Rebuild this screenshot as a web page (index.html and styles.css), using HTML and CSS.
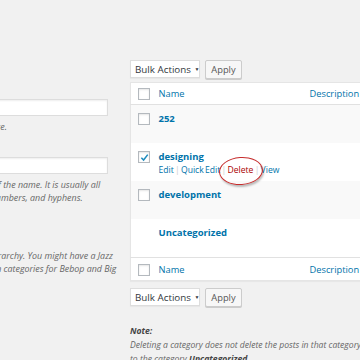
FILE: index.html
```html
<!DOCTYPE html>
<html lang="en">
<head>
    <meta charset="UTF-8">
    <meta name="viewport" content="width=device-width, initial-scale=1.0">
    <title>Categories</title>
    <link rel="stylesheet" href="styles.css">
</head>
<body>
    <div class="wrap">
        <div class="col-left">
            <div class="form-field">
                <label>Name</label>
                <div class="text-input"></div>
                <p class="desc">The name is how it appears on your site.</p>
            </div>
            <div class="form-field">
                <label>Slug</label>
                <div class="text-input"></div>
                <p class="desc">The &ldquo;slug&rdquo; is the URL-friendly version of the name. It is usually all<br>lowercase and contains only letters, numbers, and hyphens.</p>
            </div>
            <div class="form-field">
                <label>Parent</label>
                <div class="parent-select">None</div>
                <p class="desc">Categories, unlike tags, can have a hierarchy. You might have a Jazz<br>category, and under that have children categories for Bebop and Big</p>
            </div>
        </div>

        <div class="col-right">
            <div class="tablenav top">
                <div class="bulk-select">Bulk Actions <span class="arrow">&#9660;</span></div>
                <div class="btn">Apply</div>
            </div>

            <table class="list">
                <colgroup>
                    <col class="c-cb">
                    <col class="c-name">
                    <col class="c-desc">
                </colgroup>
                <thead>
                    <tr>
                        <th class="check"><span class="cb"></span></th>
                        <th><a href="#">Name</a></th>
                        <th><a href="#">Description</a></th>
                    </tr>
                </thead>
                <tbody>
                    <tr class="alt">
                        <td class="check"><span class="cb"></span></td>
                        <td><a class="row-title" href="#">252</a><div class="row-actions"></div></td>
                        <td></td>
                    </tr>
                    <tr>
                        <td class="check"><span class="cb checked">
                            <svg width="9" height="9" viewBox="0 0 10 10"><path d="M1.5 5.2 L4 7.8 L8.6 1.8" fill="none" stroke="#1e8cbe" stroke-width="1.7"/></svg>
                        </span></td>
                        <td>
                            <a class="row-title" href="#">designing</a>
                            <div class="row-actions shown">
                                <a href="#">Edit</a> <span class="sep">|</span>
                                <a href="#">Quick Edit</a> <span class="sep">|</span>
                                <span class="del-wrap"><a class="delete" href="#">Delete</a><span class="circle"></span></span> <span class="sep">|</span>
                                <a href="#">View</a>
                            </div>
                        </td>
                        <td></td>
                    </tr>
                    <tr class="alt">
                        <td class="check"><span class="cb"></span></td>
                        <td><a class="row-title" href="#">development</a><div class="row-actions"></div></td>
                        <td></td>
                    </tr>
                    <tr>
                        <td class="check"></td>
                        <td><a class="row-title" href="#">Uncategorized</a><div class="row-actions"></div></td>
                        <td></td>
                    </tr>
                </tbody>
                <tfoot>
                    <tr>
                        <th class="check"><span class="cb"></span></th>
                        <th><a href="#">Name</a></th>
                        <th><a href="#">Description</a></th>
                    </tr>
                </tfoot>
            </table>

            <div class="tablenav bottom">
                <div class="bulk-select">Bulk Actions <span class="arrow">&#9660;</span></div>
                <div class="btn">Apply</div>
            </div>

            <div class="note">
                <p><strong>Note:</strong><br>
                Deleting a category does not delete the posts in that category. Instead, posts that were only assigned<br>
                to the category <strong>Uncategorized</strong>.</p>
            </div>
        </div>
    </div>
</body>
</html>
```

FILE: styles.css
```css
html, body {
    margin: 0;
    padding: 0;
    overflow: hidden;
}
body {
    width: 360px;
    height: 360px;
    background-color: #f1f1f1;
    color: #444;
    font-family: "Open Sans", "Liberation Sans", sans-serif;
    font-size: 9.3px;
}
a {
    color: #0073aa;
    text-decoration: none;
}
.wrap {
    display: flex;
    gap: 22px;
}

/* left column: add new category form (cut off on the left) */
.col-left {
    flex: none;
    width: 259px;
    margin-left: -151px;
    padding-top: 84px;
}
.form-field {
    margin-bottom: 9px;
}
.form-field label {
    display: block;
    line-height: 15px;
}
.text-input {
    height: 15px;
    background-color: #fff;
    border: 1px solid #ddd;
    box-shadow: inset 0 1px 2px rgba(0, 0, 0, 0.07);
}
.parent-select {
    width: 60px;
    height: 15px;
    line-height: 15px;
    padding-left: 4px;
    background-color: #fff;
    border: 1px solid #ddd;
}
.desc {
    margin: 4px 0 0;
    font-style: italic;
    font-size: 8.9px;
    line-height: 13px;
    color: #666;
    white-space: nowrap;
}

/* right column: categories list */
.col-right {
    flex: none;
    width: 300px;
}
.tablenav {
    display: flex;
    gap: 5px;
    height: 18px;
}
.tablenav.top {
    margin-top: 60px;
    margin-bottom: 4px;
}
.tablenav.bottom {
    margin-top: 7px;
}
.bulk-select {
    width: 64px;
    height: 16px;
    padding-left: 4px;
    line-height: 16px;
    background-color: #fff;
    border: 1px solid #ddd;
    box-shadow: 0 1px 1px rgba(0, 0, 0, 0.04);
    color: #32373c;
    font-size: 9.8px;
    white-space: nowrap;
}
.bulk-select .arrow {
    font-size: 5px;
    vertical-align: 2px;
    margin-left: 1px;
}
.btn {
    width: 35px;
    height: 17px;
    line-height: 17px;
    text-align: center;
    background-color: #f7f7f7;
    border: 1px solid #ccc;
    border-radius: 2px;
    box-shadow: 0 1px 0 #ccc;
    color: #555;
    font-size: 9.3px;
}

.list {
    width: 280px;
    table-layout: fixed;
    border-collapse: collapse;
    background-color: #fff;
    border: 1px solid #e5e5e5;
    box-shadow: 0 1px 1px rgba(0, 0, 0, 0.04);
}
.c-cb { width: 22px; }
.c-name { width: 151px; }
.c-desc { width: 107px; }

.list th {
    height: 13px;
    padding: 4px 6px;
    line-height: 13px;
    text-align: left;
    font-weight: normal;
}
.list thead th {
    border-bottom: 1px solid #e1e1e1;
}
.list tfoot th {
    border-top: 1px solid #e1e1e1;
    padding-top: 5px;
}
.list td {
    padding: 7px 6px 4px;
    vertical-align: top;
}
.list tr.alt td {
    background-color: #f9f9f9;
}
.list .check {
    padding-left: 7px;
    padding-right: 0;
}
.list td.check {
    padding-top: 8px;
}
.cb {
    display: block;
    width: 10px;
    height: 10px;
    background-color: #fff;
    border: 1px solid #b4b9be;
    box-shadow: inset 0 1px 2px rgba(0, 0, 0, 0.1);
}
.cb svg {
    display: block;
    margin: 0.5px 0 0 0.5px;
}
.row-title {
    display: block;
    font-weight: bold;
    font-size: 9.5px;
    line-height: 13px;
}
.row-actions {
    height: 13px;
    margin-top: 1px;
    line-height: 13px;
    font-size: 8.6px;
    word-spacing: -1px;
    white-space: nowrap;
}
.row-actions .sep {
    color: #ccc;
}
.del-wrap {
    position: relative;
}
.delete {
    color: #a00;
}
.circle {
    position: absolute;
    left: -8px;
    right: -10px;
    top: -7px;
    bottom: -9px;
    border: 1.5px solid #c62d2d;
    border-radius: 50%;
    box-shadow: 1px 2px 2px rgba(0, 0, 0, 0.25);
    transform: rotate(-4deg);
}

.note p {
    margin: 18px 0 0;
    font-style: italic;
    font-size: 8.6px;
    line-height: 14px;
    color: #666;
    white-space: nowrap;
}
.note strong {
    color: #444;
}
```
